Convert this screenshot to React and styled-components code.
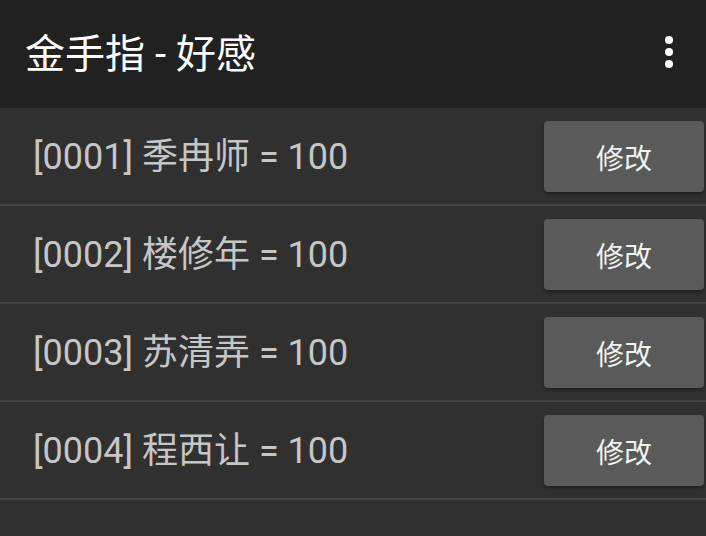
import styled, { createGlobalStyle } from 'styled-components'

const GlobalStyle = createGlobalStyle`
  html, body {
    margin: 0;
    padding: 0;
    background: #303030;
  }
  body {
    font-family: Roboto, "Noto Sans CJK SC", sans-serif;
  }
`

const Screen = styled.div`
  width: 706px;
  height: 536px;
  background: #303030;
  overflow: hidden;
  display: flex;
  flex-direction: column;
`

const Toolbar = styled.header`
  height: 108px;
  flex-shrink: 0;
  background: #212121;
  display: flex;
  align-items: center;
  justify-content: space-between;
  padding: 0 22px 0 25px;
  box-sizing: border-box;
`

const Title = styled.h1`
  margin: 0;
  font-size: 40px;
  font-weight: 400;
  color: #ffffff;
  line-height: 1;
  padding-top: 2px;
`

const MenuButton = styled.button`
  background: none;
  border: 0;
  padding: 0;
  width: 30px;
  height: 40px;
  display: flex;
  align-items: center;
  justify-content: center;
  margin-bottom: 4px;
`

const List = styled.ul`
  list-style: none;
  margin: 0;
  padding: 0;
`

const Row = styled.li`
  height: 96px;
  display: flex;
  align-items: center;
  justify-content: space-between;
  padding: 0 2px 0 33px;
  border-bottom: 2px solid #434343;
`

const Label = styled.span`
  font-size: 36px;
  color: #c6c6c6;
  line-height: 1;
  padding-top: 2px;
`

const EditButton = styled.button`
  width: 160px;
  height: 71px;
  margin-top: 1px;
  border: 0;
  border-radius: 4px;
  background: #5a5a5a;
  color: #f2f2f2;
  font-family: Roboto, "Noto Sans CJK SC", sans-serif;
  font-size: 28px;
  box-shadow: 0 2px 3px rgba(0, 0, 0, 0.35);
`

const items = [
  { id: '0001', name: '季冉师', value: 100 },
  { id: '0002', name: '楼修年', value: 100 },
  { id: '0003', name: '苏清弄', value: 100 },
  { id: '0004', name: '程西让', value: 100 },
]

const MoreIcon = () => (
  <svg width="8" height="32" viewBox="0 0 8 32">
    <circle cx="4" cy="4" r="4" fill="#fff" />
    <circle cx="4" cy="16" r="4" fill="#fff" />
    <circle cx="4" cy="28" r="4" fill="#fff" />
  </svg>
)

const App = () => {
  return (
    <Screen>
      <GlobalStyle />
      <Toolbar>
        <Title>金手指 - 好感</Title>
        <MenuButton aria-label="more">
          <MoreIcon />
        </MenuButton>
      </Toolbar>
      <List>
        {items.map(item => (
          <Row key={item.id}>
            <Label>[{item.id}] {item.name} = {item.value}</Label>
            <EditButton>修改</EditButton>
          </Row>
        ))}
      </List>
    </Screen>
  )
}

export default App
